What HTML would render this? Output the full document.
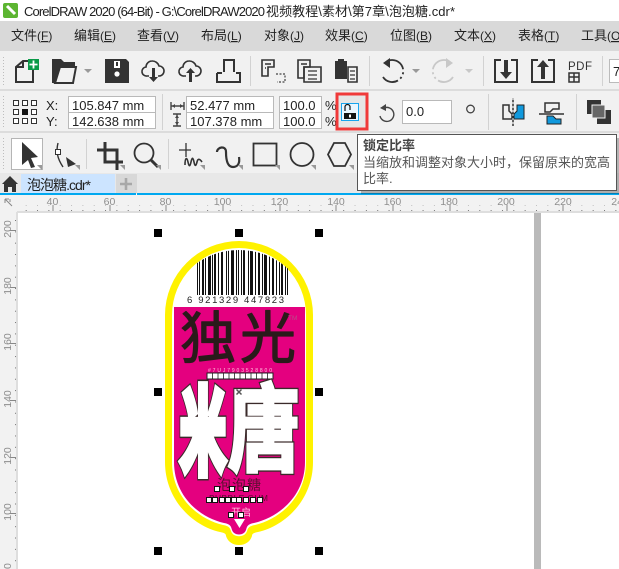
<!DOCTYPE html>
<html><head><meta charset="utf-8"><style>
html,body{margin:0;padding:0;background:#fff}
svg{display:block;position:absolute;left:0;top:0}
text{font-family:"Liberation Sans","Noto Sans CJK SC",sans-serif}
.u{text-decoration:underline}
.m{font-size:13px;fill:#222}
.l{font-size:12px}
.v{font-size:13px;fill:#222}
.r{font-size:10.5px;fill:#8e8e8e}
</style></head><body>
<svg width="619" height="569" viewBox="0 0 619 569" xmlns="http://www.w3.org/2000/svg">
<defs>
<clipPath id="bc"><circle cx="239" cy="324" r="74"/></clipPath>
<pattern id="hd" x="3" y="206" width="11.34" height="6" patternUnits="userSpaceOnUse"><rect x="0" y="4" width="1" height="1.4" fill="#777"/></pattern>
<pattern id="vd" x="12" y="220" width="6" height="11.34" patternUnits="userSpaceOnUse"><rect x="3" y="0" width="1.4" height="1" fill="#777"/></pattern>
<pattern id="dots" width="3" height="3" patternUnits="userSpaceOnUse"><rect width="1" height="1" fill="#bdbdbd"/></pattern>
</defs>

<rect width="619" height="569" fill="#fff"/>
<!-- title bar -->
<rect x="3" y="3" width="15" height="15" rx="2" fill="#5cb531"/>
<path d="M7 6l8 8" stroke="#fff" stroke-width="3"/>
<text x="24" y="16" font-size="13" fill="#222" textLength="241" lengthAdjust="spacing">CorelDRAW 2020 (64-Bit) - G:\CorelDRAW2020</text>
<text x="266" y="16" font-size="13" fill="#222" textLength="189" lengthAdjust="spacing">视频教程\素材\第7章\泡泡糖.cdr*</text>

<!-- menu -->
<rect y="21" width="619" height="30" fill="#d9d9d9"/>
<text class="m" x="11" y="40">文件<tspan class="l">(<tspan class="u">F</tspan>)</tspan></text>
<text class="m" x="74" y="40">编辑<tspan class="l">(<tspan class="u">E</tspan>)</tspan></text>
<text class="m" x="137" y="40">查看<tspan class="l">(<tspan class="u">V</tspan>)</tspan></text>
<text class="m" x="201" y="40">布局<tspan class="l">(<tspan class="u">L</tspan>)</tspan></text>
<text class="m" x="264" y="40">对象<tspan class="l">(<tspan class="u">J</tspan>)</tspan></text>
<text class="m" x="325" y="40">效果<tspan class="l">(<tspan class="u">C</tspan>)</tspan></text>
<text class="m" x="390" y="40">位图<tspan class="l">(<tspan class="u">B</tspan>)</tspan></text>
<text class="m" x="454" y="40">文本<tspan class="l">(<tspan class="u">X</tspan>)</tspan></text>
<text class="m" x="518" y="40">表格<tspan class="l">(<tspan class="u">T</tspan>)</tspan></text>
<text class="m" x="581" y="40">工具<tspan class="l">(<tspan class="u">O</tspan></tspan></text>

<!-- toolbars bg -->
<rect y="51" width="619" height="122" fill="#f1f1f1"/>
<rect y="89" width="619" height="2" fill="#dcdcdc"/>
<rect y="131" width="619" height="2" fill="#dcdcdc"/>
<rect x="3" y="55" width="3" height="31" fill="url(#dots)"/>
<rect x="3" y="95" width="3" height="32" fill="url(#dots)"/>
<rect x="3" y="137" width="3" height="32" fill="url(#dots)"/>
<g fill="#d2d2d2">
<rect x="250" y="56" width="1" height="30"/><rect x="369" y="56" width="1" height="30"/><rect x="483" y="56" width="1" height="30"/><rect x="602" y="56" width="1" height="30"/>
<rect x="162" y="94" width="1" height="36"/><rect x="488" y="94" width="1" height="36"/><rect x="576" y="94" width="1" height="36"/>
<rect x="86" y="139" width="1" height="30"/><rect x="168" y="139" width="1" height="30"/>
</g>

<!-- toolbar 1 icons -->
<g fill="none" stroke="#333" stroke-width="2">
<path d="M33 68v14H16V67l7-6h6"/><path d="M23 61v6h-7"/>
</g>
<rect x="28" y="59" width="11" height="11" fill="#0a9a48"/>
<path d="M33.500 60.500v8M29.500 64.500h8" stroke="#fff" stroke-width="1.800"/>
<path d="M52 59h9l3 3h11v5H60l-4 16h-4z" fill="#333"/>
<path d="M60 67h16l-3 16H55z" fill="none" stroke="#333" stroke-width="2"/>
<path d="M84 69h8l-4 4z" fill="#999"/>
<path d="M105 59h21l3 3v21h-24z" fill="#333"/>
<rect x="114" y="61" width="6" height="7" fill="#fff"/><rect x="116" y="62" width="2" height="4" fill="#333"/>
<circle cx="117" cy="74" r="2.600" fill="#fff"/>
<g fill="none" stroke="#333" stroke-width="1.600">
<path d="M149 76h-2a4.500 4.500 0 0 1-1-9 6 6 0 0 1 6-6 7 7 0 0 1 7 5 5 5 0 0 1 0 10h-1"/>
<path d="M186 76h-2a4.500 4.500 0 0 1-1-9 6 6 0 0 1 6-6 7 7 0 0 1 7 5 5 5 0 0 1 0 10h-1"/>
</g>
<path d="M152 68h3v9h3l-4.500 5-4.500-5h3z" fill="#333"/>
<path d="M189 82h3v-9h3l-4.500-5-4.500 5h3z" fill="#333"/>
<path d="M224 72V60h10v12M217 73h5M236 73h4v9h-23v-9" fill="none" stroke="#333" stroke-width="2"/>
<!-- copy / cut group -->
<g fill="none" stroke="#333" stroke-width="1.600">
<path d="M262 60h12v7h-6v9h-6zM265 64h6M265 68h1"/>
<path d="M298 60h12v7h-6v11h-6zM301 64h6"/>
<path d="M304 67h17v15h-17z"/><path d="M308 71h9M308 75h9M308 79h9" stroke-width="1.200"/>
<path d="M348 67h9v15h-9z"/><path d="M350 71h5M350 75h5M350 79h5" stroke-width="1.200"/>
</g>
<path d="M276 74h9v8h-8" fill="none" stroke="#444" stroke-width="1.200" stroke-dasharray="2 1.500"/>
<path d="M335 61h3v-2h6v2h3v18h-12z" fill="#333"/>
<!-- undo/redo -->
<path d="M386 62a11 11 0 1 1-3 15" fill="none" stroke="#333" stroke-width="1.800" stroke-dasharray="22 3 2 3 2 3"/>
<path d="M390 58v10l-7-5z" fill="#333"/>
<path d="M412 69h8l-4 4z" fill="#999"/>
<path d="M450 62a11 11 0 1 0 3 15" fill="none" stroke="#c8c8c8" stroke-width="1.800" stroke-dasharray="22 3 2 3 2 3"/>
<path d="M446 58v10l7-5z" fill="#c8c8c8"/>
<path d="M465 69h8l-4 4z" fill="#c8c8c8"/>
<!-- import/export -->
<path d="M501 60h-6v22h22V60h-6M538 60h-6v22h22V60h-6" fill="none" stroke="#333" stroke-width="2"/>
<path d="M504 60h4v12h4l-6 7-6-7h4z" fill="#333"/>
<path d="M541 79h4V67h4l-6-7-6 7h4z" fill="#333"/>
<text x="568" y="70" font-size="11.500" fill="#333" textLength="24">PDF</text>
<path d="M569 73h10v9h-10zM574 73v9M569 77h10" fill="none" stroke="#333" stroke-width="1.500"/>
<rect x="609.500" y="59.500" width="12" height="23" fill="#fff" stroke="#bbb"/>
<text x="613" y="76" class="v">7</text>

<!-- property bar -->
<g fill="#fff" stroke="#333" stroke-width="1">
<rect x="13.500" y="100.500" width="5" height="5"/><rect x="22.500" y="100.500" width="5" height="5"/><rect x="31.500" y="100.500" width="5" height="5"/>
<rect x="13.500" y="109.500" width="5" height="5"/><rect x="31.500" y="109.500" width="5" height="5"/>
<rect x="13.500" y="118.500" width="5" height="5"/><rect x="22.500" y="118.500" width="5" height="5"/><rect x="31.500" y="118.500" width="5" height="5"/>
</g>
<rect x="22" y="109" width="6" height="6" fill="#111"/>
<text x="46" y="110" class="v">X:</text><text x="46" y="126" class="v">Y:</text>
<g fill="#fff" stroke="#b9b9b9">
<rect x="68.500" y="96.500" width="87" height="16"/><rect x="68.500" y="112.500" width="87" height="16"/>
<rect x="186.500" y="96.500" width="87" height="16"/><rect x="186.500" y="112.500" width="87" height="16"/>
<rect x="279.500" y="96.500" width="42" height="16"/><rect x="279.500" y="112.500" width="42" height="16"/>
<rect x="402.500" y="100.500" width="49" height="23"/>
</g>
<text x="72" y="110" class="v">105.847 mm</text><text x="72" y="126" class="v">142.638 mm</text>
<text x="190" y="110" class="v">52.477 mm</text><text x="190" y="126" class="v">107.378 mm</text>
<text x="283" y="110" class="v">100.0</text><text x="283" y="126" class="v">100.0</text>
<text x="325" y="110" class="v">%</text><text x="325" y="126" class="v">%</text>
<text x="406" y="116" class="v">0.0</text>
<path d="M171 102v8M184 102v8M171 106h13M177 126v-12M173 114h8M173 126h8" fill="none" stroke="#444" stroke-width="1.400"/>
<path d="M172 106l3-2v4zM183 106l-3-2v4zM177 115l-2 3h4zM177 125l-2-3h4z" fill="#444"/>
<!-- lock button -->
<rect x="337" y="94" width="30" height="35" fill="#e6e6e6" stroke="#f03a3a" stroke-width="3"/>
<rect x="341.500" y="103.500" width="17" height="17" fill="#eaf6ff" stroke="#18a4ee"/>
<path d="M345 111v-4a2.500 2.500 0 0 1 5 0v3" fill="none" stroke="#111" stroke-width="1.200"/>
<rect x="344" y="113" width="12" height="6" fill="#111"/>
<rect x="349" y="114.500" width="2" height="3" fill="#fff"/>
<!-- rotate -->
<path d="M384 108a7 7 0 1 1-4 8" fill="none" stroke="#444" stroke-width="1.400"/>
<path d="M386 104v7l-6-3z" fill="#444"/>
<circle cx="470.500" cy="109" r="3.800" fill="none" stroke="#444" stroke-width="1.300"/>
<!-- mirror -->
<path d="M503 105h6v6l3 3v5h-9zM513 98v28" fill="none" stroke="#333" stroke-width="1.500"/>
<path d="M513 98v28" stroke="#f1f1f1" stroke-width="1" stroke-dasharray="2 2"/>
<path d="M517 105h7v14h-10v-5l3-3z" fill="#1199dd" stroke="#222"/>
<path d="M545 103h14v6h-6l-3 3h-5zM539 114h25" fill="none" stroke="#333" stroke-width="1.500"/>
<path d="M547 116h6l3 3h5v5h-14z" fill="#1199dd" stroke="#222"/>
<!-- order -->
<rect x="587" y="100" width="14" height="14" fill="#333"/>
<rect x="597" y="110" width="14" height="14" fill="#333"/>
<rect x="592" y="105" width="13" height="13" fill="#666" stroke="#f1f1f1"/>

<!-- toolbox -->
<rect x="11.500" y="138.500" width="31" height="31" fill="#fff" stroke="#b5b5b5"/>
<path d="M22 142l16 15-7 1 4 9-4 1-3-8-6 5z" fill="#333"/>
<path d="M58 143c-2 8-1 15 5 24" fill="none" stroke="#333" stroke-width="1.400"/>
<rect x="55.500" y="149.500" width="5" height="5" fill="#fff" stroke="#333"/>
<path d="M66 157l10 7-8 3z" fill="#333"/>
<path d="M105 142v20h18M97 150h20v20" fill="none" stroke="#333" stroke-width="3"/>
<circle cx="144" cy="153" r="9.500" fill="none" stroke="#333" stroke-width="1.800"/>
<path d="M151 160l7 7" stroke="#333" stroke-width="3"/>
<path d="M186 143v14M179 150h12" stroke="#333" stroke-width="1.300"/>
<path d="M185 165c0-8 2-8 3-3s2 5 3 0 2-5 3 0 2 4 3 0 3-3 5 0" fill="none" stroke="#333" stroke-width="1.600"/>
<path d="M217 152c0-5 9-7 9 0 0 6 1 15 7 15 5 0 7-4 6-10" fill="none" stroke="#333" stroke-width="2.200"/>
<rect x="253.500" y="143.500" width="23" height="22" fill="none" stroke="#333" stroke-width="1.800"/>
<circle cx="302" cy="154.500" r="11.500" fill="none" stroke="#333" stroke-width="1.800"/>
<path d="M334 143h11l6 11.500-6 11.500h-11l-6-11.500z" fill="none" stroke="#333" stroke-width="1.800"/>
<g fill="#999">
<path d="M42 170v-5h-5zM80 170v-5h-5zM125 170v-5h-5zM161 170v-5h-5zM205 170v-5h-5zM243 170v-5h-5zM280 170v-5h-5zM316 170v-5h-5zM354 170v-5h-5z"/>
</g>

<!-- tabs -->
<rect y="173" width="619" height="21" fill="#e8e8e8"/>
<path d="M2 184l8-8 8 8h-2v8h-4v-5h-4v5H4v-8z" fill="#333"/>
<rect x="21" y="174" width="94" height="19" fill="#cce4ff"/>
<text x="27" y="190" font-size="14" fill="#222" textLength="64">泡泡糖.cdr*</text>
<rect x="116" y="174" width="21" height="19" fill="#d8d8d8"/>
<path d="M126 178v12M120 184h12" stroke="#a8a8a8" stroke-width="2.600"/>
<rect y="193" width="136" height="2" fill="#00a8f0"/><rect x="137" y="193" width="482" height="2" fill="#00a8f0"/>

<!-- rulers -->
<rect y="195" width="619" height="17" fill="#f2f2f2"/>
<rect y="212" width="17" height="357" fill="#f2f2f2"/>
<rect x="17" y="211" width="602" height="2" fill="#dedede"/>
<rect x="16" y="212" width="2" height="357" fill="#dedede"/>
<rect x="18" y="205" width="601" height="6" fill="url(#hd)"/>
<rect x="11" y="213" width="5" height="356" fill="url(#vd)"/>
<path d="M5 199l7 7M5 199h4M5 199v4M10 199v3" stroke="#888" stroke-width="1" fill="none"/>
<g fill="#888">
<rect x="52.500" y="205" width="1" height="6"/><rect x="109.500" y="205" width="1" height="6"/><rect x="165.500" y="205" width="1" height="6"/><rect x="222.500" y="205" width="1" height="6"/><rect x="279.500" y="205" width="1" height="6"/><rect x="335.500" y="205" width="1" height="6"/><rect x="392.500" y="205" width="1" height="6"/><rect x="449.500" y="205" width="1" height="6"/><rect x="506.500" y="205" width="1" height="6"/><rect x="562.500" y="205" width="1" height="6"/>
<rect x="10" y="230" width="6" height="1"/><rect x="10" y="287" width="6" height="1"/><rect x="10" y="343" width="6" height="1"/><rect x="10" y="400" width="6" height="1"/><rect x="10" y="457" width="6" height="1"/><rect x="10" y="513" width="6" height="1"/>
</g>
<g text-anchor="middle">
<text class="r" x="52.500" y="205">40</text><text class="r" x="109.500" y="205">60</text><text class="r" x="165.500" y="205">80</text><text class="r" x="222.500" y="205">100</text><text class="r" x="279.500" y="205">120</text><text class="r" x="336" y="205">140</text><text class="r" x="392.500" y="205">160</text><text class="r" x="449" y="205">180</text><text class="r" x="506" y="205">200</text><text class="r" x="563" y="205">220</text><text class="r" x="620" y="205">240</text>
<text class="r" transform="translate(11 229) rotate(-90)">200</text>
<text class="r" transform="translate(11 286) rotate(-90)">180</text>
<text class="r" transform="translate(11 342) rotate(-90)">160</text>
<text class="r" transform="translate(11 399) rotate(-90)">140</text>
<text class="r" transform="translate(11 456) rotate(-90)">120</text>
<text class="r" transform="translate(11 512) rotate(-90)">100</text>
<text class="r" transform="translate(11 569) rotate(-90)">80</text>
</g>

<!-- page edge -->
<rect x="534" y="213" width="7" height="356" fill="#bababa"/>

<!-- label -->
<path d="M165 315A74 74 0 0 1 313 315V462C313 500 285 526 258 532C253 533 252 534 252 536C250 542 245 545 239 545C233 545 228 542 226 536C226 534 225 533 220 532C193 526 165 500 165 462Z" fill="#fff200"/>
<path d="M172 315A67 67 0 0 1 306 315V462C306 497 280 519 255 525C249 526 248 528 247 531C245 538 233 538 231 531C230 528 229 526 223 525C198 519 172 497 172 462Z" fill="#fff"/>
<path d="M174 307H305V462C305 495 280 517 254 523C248 524 247 526 246 530C244 536 234 536 232 530C231 526 230 524 224 523C198 517 174 495 174 462Z" fill="#e4007f"/>
<!-- barcode -->
<g clip-path="url(#bc)" fill="#111">
<rect x="197" y="245" width="1" height="50"/><rect x="199" y="245" width="1" height="50"/><rect x="202" y="245" width="2" height="50"/><rect x="205" y="245" width="1" height="50"/><rect x="208" y="245" width="3" height="50"/><rect x="212" y="245" width="1" height="50"/><rect x="214" y="245" width="2" height="50"/><rect x="218" y="245" width="1" height="50"/><rect x="221" y="245" width="2" height="50"/><rect x="226" y="245" width="1" height="50"/><rect x="228" y="245" width="1" height="50"/><rect x="231" y="245" width="3" height="50"/><rect x="236" y="245" width="1" height="50"/><rect x="238" y="245" width="1" height="50"/><rect x="241" y="245" width="1" height="50"/><rect x="243" y="245" width="2" height="50"/><rect x="248" y="245" width="1" height="50"/><rect x="250" y="245" width="3" height="50"/><rect x="255" y="245" width="1" height="50"/><rect x="258" y="245" width="2" height="50"/><rect x="262" y="245" width="1" height="50"/><rect x="264" y="245" width="3" height="50"/><rect x="269" y="245" width="1" height="50"/><rect x="272" y="245" width="2" height="50"/><rect x="276" y="245" width="1" height="50"/><rect x="279" y="245" width="1" height="50"/><rect x="281" y="245" width="2" height="50"/><rect x="285" y="245" width="1" height="50"/><rect x="287" y="245" width="1" height="50"/>
</g>
<text x="187" y="303" font-size="9.500" fill="#222" textLength="97">6 921329 447823</text>
<!-- logo -->
<text x="180" y="358" font-size="56" fill="#2a1a1a" stroke="#2a1a1a" stroke-width="1.200" stroke-linejoin="round">独</text>
<text x="240" y="358" font-size="56" fill="#2a1a1a" stroke="#2a1a1a" stroke-width="1.200" stroke-linejoin="round">光</text>
<text x="288" y="320" font-size="6.500" fill="#b84c88">TM</text>
<text x="208" y="372" font-size="5" fill="#ffc0dd" textLength="64">#7UJ7903528800</text>
<rect x="207" y="373" width="66" height="6" fill="#fff" stroke="#222"/>
<path d="M212.500 373v6M218 373v6M223.500 373v6M229 373v6M234.500 373v6M240 373v6M245.500 373v6M251 373v6M256.500 373v6M262 373v6M267.500 373v6" stroke="#222" stroke-width=".8"/>
<!-- big art text -->
<g font-weight="700" text-anchor="middle" fill="#fff">
<g transform="translate(203 466) scale(.5 1.030)"><text font-size="92" stroke="#3a2a2a" stroke-width="11">米</text><text font-size="92" stroke="#fff" stroke-width="8">米</text></g>
<g transform="translate(264 463) scale(.82 1.070)"><text font-size="88" stroke="#3a2a2a" stroke-width="6">唐</text><text font-size="88" stroke="#fff" stroke-width="3.500">唐</text></g>
</g>
<path d="M236.500 389.500l5 5M241.500 389.500l-5 5" stroke="#555" stroke-width="1.500"/>
<text x="217" y="490" font-size="14" fill="#5a1030" textLength="44">泡泡糖</text>
<text x="209" y="501" font-size="8.500" fill="#5a1030" textLength="59">BUBBLE GUM</text>
<text x="231" y="516" font-size="10" fill="#ffc0dd" textLength="20">开启</text>
<path d="M234 519h11l-5.500 9z" fill="#fff"/>
<!-- nodes -->
<g fill="#fff" stroke="#111" stroke-width="1">
<rect x="214.500" y="486.500" width="5" height="5"/><rect x="229.500" y="486.500" width="5" height="5"/><rect x="243.500" y="486.500" width="5" height="5"/>
<rect x="206.500" y="497.500" width="5" height="5"/><rect x="212.500" y="497.500" width="5" height="5"/><rect x="219.500" y="497.500" width="5" height="5"/><rect x="225.500" y="497.500" width="5" height="5"/><rect x="231.500" y="497.500" width="5" height="5"/><rect x="236.500" y="497.500" width="5" height="5"/><rect x="243.500" y="497.500" width="5" height="5"/><rect x="250.500" y="497.500" width="5" height="5"/><rect x="257.500" y="497.500" width="5" height="5"/>
<rect x="228.500" y="512.500" width="5" height="5"/><rect x="238.500" y="512.500" width="5" height="5"/>
</g>
<!-- selection handles -->
<g fill="#000">
<rect x="154" y="229" width="8" height="8"/><rect x="235" y="229" width="8" height="8"/><rect x="315" y="229" width="8" height="8"/>
<rect x="154" y="388" width="8" height="8"/><rect x="315" y="388" width="8" height="8"/>
<rect x="154" y="547" width="8" height="8"/><rect x="235" y="547" width="8" height="8"/><rect x="315" y="547" width="8" height="8"/>
</g>

<!-- tooltip -->
<rect x="361" y="138" width="258" height="56" fill="#000" opacity=".25"/>
<rect x="357.500" y="134.500" width="259" height="56" fill="#fff" stroke="#555"/>
<text x="363" y="150" font-size="13" font-weight="700" fill="#444">锁定比率</text>
<text x="363" y="167" font-size="13" fill="#555" textLength="247">当缩放和调整对象大小时，保留原来的宽高</text>
<text x="363" y="183" font-size="13" fill="#555">比率.</text>
</svg>
</body></html>
